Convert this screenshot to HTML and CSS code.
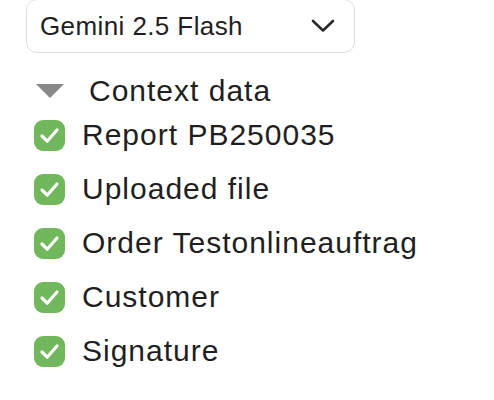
FILE: index.html
```html
<!DOCTYPE html>
<html>
<head>
<meta charset="utf-8">
<link rel="stylesheet" href="styles.css">
</head>
<body>
<div class="panel">
  <div class="select">
    <span class="select-label">Gemini 2.5 Flash</span>
    <svg class="chevron" width="24" height="14" viewBox="0 0 24 14"><path d="M2 2 L12 11.5 L22 2" fill="none" stroke="#2a2a2a" stroke-width="2.6" stroke-linecap="round" stroke-linejoin="round"/></svg>
  </div>
  <div class="summary">
    <span class="triangle"></span>
    <span class="summary-label">Context data</span>
  </div>
  <ul class="items">
    <li class="item"><span class="check"><svg width="31" height="31" viewBox="0 0 31 31"><path d="M8 16 L13.2 21.2 L23 10" fill="none" stroke="#fff" stroke-width="3.2" stroke-linecap="round" stroke-linejoin="round"/></svg></span><span>Report PB250035</span></li>
    <li class="item"><span class="check"><svg width="31" height="31" viewBox="0 0 31 31"><path d="M8 16 L13.2 21.2 L23 10" fill="none" stroke="#fff" stroke-width="3.2" stroke-linecap="round" stroke-linejoin="round"/></svg></span><span>Uploaded file</span></li>
    <li class="item"><span class="check"><svg width="31" height="31" viewBox="0 0 31 31"><path d="M8 16 L13.2 21.2 L23 10" fill="none" stroke="#fff" stroke-width="3.2" stroke-linecap="round" stroke-linejoin="round"/></svg></span><span>Order Testonlineauftrag</span></li>
    <li class="item"><span class="check"><svg width="31" height="31" viewBox="0 0 31 31"><path d="M8 16 L13.2 21.2 L23 10" fill="none" stroke="#fff" stroke-width="3.2" stroke-linecap="round" stroke-linejoin="round"/></svg></span><span>Customer</span></li>
    <li class="item"><span class="check"><svg width="31" height="31" viewBox="0 0 31 31"><path d="M8 16 L13.2 21.2 L23 10" fill="none" stroke="#fff" stroke-width="3.2" stroke-linecap="round" stroke-linejoin="round"/></svg></span><span>Signature</span></li>
  </ul>
</div>
</body>
</html>
```

FILE: styles.css
```css
html, body {
  margin: 0;
  padding: 0;
  background: #fff;
}
body {
  font-family: "Liberation Sans", Arial, sans-serif;
  color: #1f1f22;
}
.panel {
  padding: 0 0 0 26px;
}
.select {
  box-sizing: border-box;
  width: 329px;
  height: 54px;
  margin-top: -1px;
  border: 1.5px solid #dedfe2;
  border-radius: 11px;
  display: flex;
  align-items: center;
  justify-content: space-between;
  padding: 0 19px 0 13px;
}
.select-label {
  font-size: 26px;
  letter-spacing: 0.4px;
}
.chevron {
  display: block;
}
.summary {
  display: flex;
  align-items: center;
  height: 36px;
  margin-top: 20px;
  padding-left: 10px;
}
.triangle {
  width: 0;
  height: 0;
  border-left: 14px solid transparent;
  border-right: 14px solid transparent;
  border-top: 14px solid #888;
  margin-right: 25px;
}
.summary-label {
  font-size: 30px;
  letter-spacing: 1px;
}
.items {
  list-style: none;
  margin: -1px 0 0;
  padding: 0 0 0 8px;
}
.item {
  display: flex;
  align-items: center;
  height: 54px;
  font-size: 30px;
  letter-spacing: 1px;
}
.check {
  width: 31px;
  height: 31px;
  border-radius: 9px;
  background: #70b85b;
  margin-right: 17px;
  flex: none;
}
.check svg {
  display: block;
}
```
